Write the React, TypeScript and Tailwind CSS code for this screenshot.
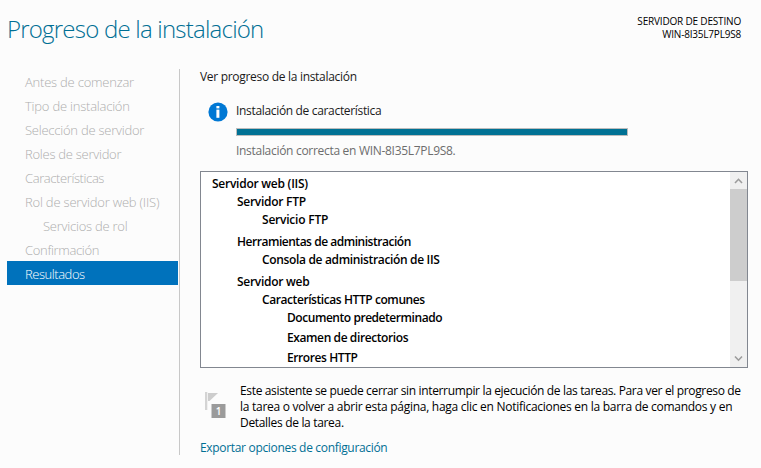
const steps = [
  { label: 'Antes de comenzar', cls: 'pl-[18px] tracking-[-0.22px]' },
  { label: 'Tipo de instalación', cls: 'pl-[18px] tracking-[-0.22px]' },
  { label: 'Selección de servidor', cls: 'pl-[18px] tracking-[-0.24px]' },
  { label: 'Roles de servidor', cls: 'pl-[18px] tracking-[-0.26px]' },
  { label: 'Características', cls: 'pl-[18px] tracking-[-0.4px]' },
  { label: 'Rol de servidor web (IIS)', cls: 'pl-[18px] tracking-[-0.2px]' },
  { label: 'Servicios de rol', cls: 'pl-[36px] tracking-[-0.24px]' },
  { label: 'Confirmación', cls: 'pl-[18px] tracking-[-0.33px]' },
];

const features = [
  { label: 'Servidor web (IIS)', cls: 'pl-[11px] tracking-[-0.25px]' },
  { label: 'Servidor FTP', cls: 'pl-[36px] tracking-[-0.28px]' },
  { label: 'Servicio FTP', cls: 'pl-[61px] tracking-[-0.22px]' },
  { label: 'Herramientas de administración', cls: 'mt-1 pl-[36px] tracking-[-0.47px]' },
  { label: 'Consola de administración de IIS', cls: 'pl-[61px] tracking-[-0.34px]' },
  { label: 'Servidor web', cls: 'mt-1 pl-[36px] tracking-[-0.28px]' },
  { label: 'Características HTTP comunes', cls: 'pl-[61px] tracking-[-0.42px]' },
  { label: 'Documento predeterminado', cls: 'pl-[86px] tracking-[-0.45px]' },
  { label: 'Examen de directorios', cls: 'mt-0.5 pl-[86px] tracking-[-0.4px]' },
  { label: 'Errores HTTP', cls: 'mt-0.5 pl-[86px] tracking-[-0.4px]' },
];

function InfoIcon() {
  return (
    <svg width="20" height="20" viewBox="0 0 20 20" className="shrink-0">
      <circle cx="10" cy="10" r="9.6" fill="#0078d4" />
      <rect x="8.4" y="4" width="3" height="2.4" fill="#fff" />
      <rect x="8.4" y="7.6" width="3" height="8.2" fill="#fff" />
    </svg>
  );
}

function FlagIcon() {
  return (
    <svg width="22" height="27" viewBox="0 0 22 27" className="shrink-0">
      <rect x="0" y="0" width="2.3" height="18" fill="#d4d4d4" />
      <path d="M3 1H13L4.5 9H3Z" fill="#cdcdcd" />
      <rect x="6.5" y="12" width="14" height="14" fill="#9b9b9b" />
      <text x="13.5" y="22.5" textAnchor="middle" fontSize="10" fontWeight="600" fill="#fff">1</text>
    </svg>
  );
}

function ScrollBar() {
  return (
    <div className="flex h-full w-[17px] shrink-0 flex-col bg-[#f0f0f0]">
      <div className="flex h-[17px] items-center justify-center">
        <svg width="9" height="7" viewBox="0 0 9 7"><path d="M1 6L4.5 2.3L8 6" fill="none" stroke="#9c9c9c" strokeWidth="1.6" /></svg>
      </div>
      <div className="h-[92px] bg-[#cdcdcd]" />
      <div className="mt-auto flex h-[17px] items-center justify-center">
        <svg width="9" height="7" viewBox="0 0 9 7"><path d="M1 1.5L4.5 5.2L8 1.5" fill="none" stroke="#9c9c9c" strokeWidth="1.6" /></svg>
      </div>
    </div>
  );
}

export default function App() {
  return (
    <div className="flex h-[468px] w-[761px] flex-col overflow-hidden whitespace-nowrap bg-[#fcfcfc] font-['Open_Sans','Noto_Sans',sans-serif] text-[12px] text-[#1a1a1a]">
      <header className="flex h-[69px] shrink-0 justify-between pl-[7px] pr-5">
        <h1 className="pt-3 text-[24px] font-light leading-[34px] tracking-[-0.78px] text-[#006f94]"><span>Progreso de la instalación</span></h1>
        <div className="flex flex-col items-end pt-[15px] text-[10px] leading-[13px] text-black">
          <span className="tracking-[-0.18px]">SERVIDOR DE DESTINO</span>
          <span className="tracking-[-0.2px]">WIN-8I35L7PL9S8</span>
        </div>
      </header>
      <div className="flex min-h-0 flex-1">
        <nav className="mb-[13px] ml-[7px] flex w-[173px] shrink-0 flex-col border-r border-[#c8c8c8] pr-px pt-px text-[13px] font-light leading-6 text-[#aeaeae]">
          {steps.map((s) => (
            <div key={s.label} className={`h-6 ${s.cls}`}><span>{s.label}</span></div>
          ))}
          <div className="-mt-px h-6 bg-[#0072bc] pl-[18px] font-light leading-[26px] tracking-[-0.45px] text-white"><span>Resultados</span></div>
        </nav>
        <main className="flex flex-1 flex-col pl-5">
          <p className="h-4 leading-4 tracking-[-0.3px]"><span>Ver progreso de la instalación</span></p>
          <div className="mt-[17px] flex gap-2 pl-2">
            <InfoIcon />
            <div className="flex flex-col">
              <p className="h-[26px] leading-[18px] tracking-[-0.33px]"><span>Instalación de característica</span></p>
              <div className="h-2 w-[392px] border border-[#bcbcbc] bg-[#007194]" />
              <p className="mt-[7px] h-4 leading-4 tracking-[-0.3px] text-[#6d6d6d]"><span>Instalación correcta en WIN-8I35L7PL9S8.</span></p>
            </div>
          </div>
          <div className="mt-3 flex h-[197px] w-[548px] border border-[#828790] bg-white">
            <div className="flex-1 overflow-hidden pt-[3px] text-[12px] font-semibold text-black">
              {features.map((f) => (
                <div key={f.label} className={`h-[18px] leading-[18px] ${f.cls}`}><span>{f.label}</span></div>
              ))}
            </div>
            <ScrollBar />
          </div>
          <div className="mt-[15px] flex pl-[5px] text-black">
            <div className="w-[35px] pt-[9px]"><FlagIcon /></div>
            <div className="flex flex-col leading-4">
              <span className="tracking-[-0.345px]">Este asistente se puede cerrar sin interrumpir la ejecución de las tareas. Para ver el progreso de</span>
              <span className="tracking-[-0.275px]">la tarea o volver a abrir esta página, haga clic en Notificaciones en la barra de comandos y en</span>
              <span className="tracking-[-0.32px]">Detalles de la tarea.</span>
            </div>
          </div>
          <a className="mt-[9px] leading-4 tracking-[-0.32px] text-[#006f94]"><span>Exportar opciones de configuración</span></a>
        </main>
      </div>
    </div>
  );
}
